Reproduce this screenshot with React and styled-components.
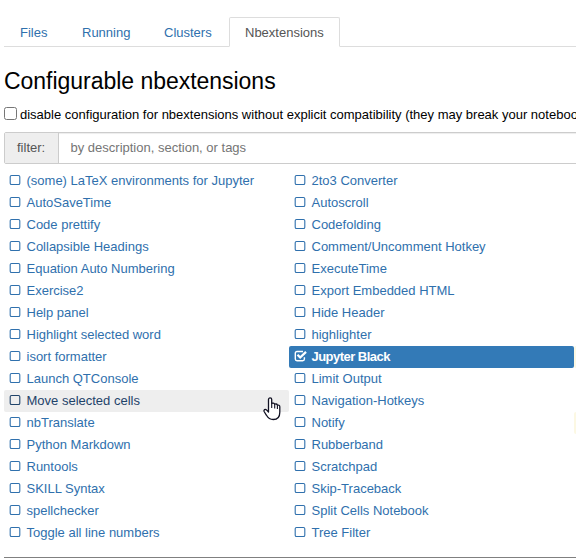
import React from "react";
import styled, { createGlobalStyle, css } from "styled-components";

const GlobalStyle = createGlobalStyle`
  *, *::before, *::after { box-sizing: border-box; }
  html, body { margin: 0; overflow: hidden; background: #fff; }
  body {
    font-family: "Liberation Sans", Arial, sans-serif;
    font-size: 13px;
    line-height: 20px;
    color: #000;
  }
`;

const Page = styled.main`
  position: relative;
  width: 576px;
  height: 559px;
  padding: 17px 0 0 4px;
  overflow: hidden;
`;

const Tabs = styled.nav`
  display: flex;
  height: 30px;
  border-bottom: 1px solid #ddd;
`;

const Tab = styled.a`
  flex: none;
  width: ${(p) => p.$width}px;
  height: 30px;
  margin-right: 2px;
  padding: 5px 0 0 15px;
  border: 1px solid ${(p) => (p.$active ? "#ddd" : "transparent")};
  border-bottom-color: ${(p) => (p.$active ? "#fff" : "transparent")};
  border-radius: 2px 2px 0 0;
  color: ${(p) => (p.$active ? "#555" : "#2f70ad")};
  white-space: nowrap;
`;

const Title = styled.h1`
  margin: 18px 0 0;
  font-size: 23px;
  font-weight: 400;
  line-height: 32px;
  letter-spacing: -0.03px;
  white-space: nowrap;
`;

const Compat = styled.label`
  display: flex;
  height: 20px;
  margin-top: 8px;
  white-space: nowrap;
`;

const NativeBox = styled.span`
  flex: none;
  width: 13px;
  height: 13px;
  margin: 2px 3px 0 0;
  border: 1px solid #767676;
  border-radius: 2.5px;
  background: #fff;
`;

const Filter = styled.div`
  display: flex;
  width: 580px;
  height: 32px;
  margin-top: 7px;
  border: 1px solid #ccc;
  border-radius: 2px;
  box-shadow: inset 0 1px 1px rgba(0, 0, 0, 0.075);
  line-height: 29px;
`;

const Addon = styled.span`
  flex: none;
  width: 54px;
  padding-left: 12px;
  border-right: 1px solid #ccc;
  background: #eee;
  color: #555;
`;

const Placeholder = styled.span`
  padding-left: 11.5px;
  color: #757575;
`;

const Columns = styled.div`
  display: grid;
  grid-template-columns: 285px 285px 285px;
  width: 855px;
  margin-top: 6px;
`;

const Column = styled.ul`
  margin: 0;
  padding: 0;
  list-style: none;
`;

const looks = {
  hover: css`
    background: #eee;
    color: #1f436a;
  `,
  selected: css`
    background: #337ab7;
    color: #fff;
    font-weight: 700;
    letter-spacing: -0.53px;
  `,
  warning: css`
    background: #fcf8e3;
  `,
};

const Item = styled.li`
  display: flex;
  height: 22px;
  padding-left: 5px;
  border-radius: 2px;
  line-height: 21px;
  color: #2f70ad;
  white-space: nowrap;
  ${(p) => looks[p.$look]}
`;

const Icon = styled.svg`
  flex: none;
  width: 13px;
  height: 12px;
  margin: 4px 4.5px 0 0;
  fill: none;
  stroke: currentColor;
`;

const Rule = styled.hr`
  margin: 13px 0 0;
  border: 0;
  border-top: 1px solid #808080;
`;

const Pointer = styled.svg`
  position: absolute;
  left: 262px;
  top: 396px;
  width: 20px;
  height: 26px;
`;

const left = [
  "(some) LaTeX environments for Jupyter", "AutoSaveTime", "Code prettify",
  "Collapsible Headings", "Equation Auto Numbering", "Exercise2", "Help panel",
  "Highlight selected word", "isort formatter", "Launch QTConsole",
  "Move selected cells", "nbTranslate", "Python Markdown", "Runtools",
  "SKILL Syntax", "spellchecker", "Toggle all line numbers",
];
const right = [
  "2to3 Converter", "Autoscroll", "Codefolding", "Comment/Uncomment Hotkey",
  "ExecuteTime", "Export Embedded HTML", "Hide Header", "highlighter",
  "Jupyter Black", "Limit Output", "Navigation-Hotkeys", "Notify", "Rubberband",
  "Scratchpad", "Skip-Traceback", "Split Cells Notebook", "Tree Filter",
];
const warningRows = [8, 11];

function CheckIcon({ checked }) {
  return (
    <Icon viewBox="0 0 13 12">
      {checked ? (
        <>
          <path d="M10.400 7.200V9a1.700 1.700 0 0 1-1.700 1.700H3A1.700 1.700 0 0 1 1.300 9V3.200A1.700 1.700 0 0 1 3 1.500h6" strokeWidth="1.400" />
          <path d="M3.500 4.800 6.200 7.500 12 1.900" strokeWidth="2.300" />
        </>
      ) : (
        <rect x="1.200" y="1.500" width="9.600" height="9" rx="1.300" strokeWidth="1.100" />
      )}
    </Icon>
  );
}

function List({ items, looksByName }) {
  return (
    <Column>
      {items.map((name) => (
        <Item key={name} $look={looksByName[name]}>
          <CheckIcon checked={looksByName[name] === "selected"} />
          <span>{name}</span>
        </Item>
      ))}
    </Column>
  );
}

export default function App() {
  return (
    <Page>
      <GlobalStyle />
      <Tabs>
        <Tab $width={60}>Files</Tab>
        <Tab $width={80}>Running</Tab>
        <Tab $width={79}>Clusters</Tab>
        <Tab $width={111} $active>Nbextensions</Tab>
      </Tabs>
      <Title>Configurable nbextensions</Title>
      <Compat>
        <NativeBox />
        disable configuration for nbextensions without explicit compatibility (they may break your notebook
      </Compat>
      <Filter>
        <Addon>filter:</Addon>
        <Placeholder>by description, section, or tags</Placeholder>
      </Filter>
      <Columns>
        <List items={left} looksByName={{ "Move selected cells": "hover" }} />
        <List items={right} looksByName={{ "Jupyter Black": "selected" }} />
        <Column>
          {right.map((name, i) => (
            <Item key={name} $look={warningRows.includes(i) ? "warning" : undefined} />
          ))}
        </Column>
      </Columns>
      <Rule />
      <Pointer viewBox="0 0 20 26">
        <path
          d="M6.500 14V3.500a1.600 1.600 0 0 1 3.200 0V7.600c.7-.8 2.600-.6 3 .7.800-.7 2.400-.4 2.700.9.900-.4 2.400 0 2.400 1.500v5.500c0 4.500-2.500 7.300-6.500 7.300-3.500 0-5.300-1.500-6.800-4.200L2.100 15.500c-.7-1.600 1.100-2.800 2.400-1.600l2 2.100Z"
          fill="#fff" stroke="#111122" strokeWidth="1.300" strokeLinejoin="round"
        />
        <path d="M9.700 7.600V12M12.700 8.300V12.500M15.400 9.200V13" fill="none" stroke="#111122" strokeWidth="1.100" />
      </Pointer>
    </Page>
  );
}
